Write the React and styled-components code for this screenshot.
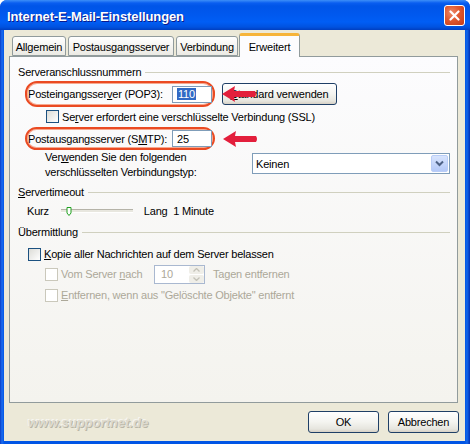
import React from 'react'
import styled, { createGlobalStyle } from 'styled-components'

const GlobalStyle = createGlobalStyle`
  html, body {
    margin: 0;
    padding: 0;
    background: #fff;
  }
  body {
    font-family: 'Liberation Sans', Tahoma, Arial, sans-serif;
    font-size: 11px;
    letter-spacing: -0.2px;
    color: #000;
  }
`

const Window = styled.div`
  width: 470px;
  height: 444px;
  box-sizing: border-box;
  display: flex;
  flex-direction: column;
  border-radius: 7px 7px 0 0;
  overflow: hidden;
  background: linear-gradient(to right, #0a3cc4 0, #1b6cf0 2px, #0055e5 4px, #0055e5 calc(100% - 5px), #1266ea calc(100% - 3px), #0030b4 100%);
`

const TitleBar = styled.div`
  height: 30px;
  flex: none;
  display: flex;
  align-items: center;
  justify-content: space-between;
  padding: 0 5px 0 7px;
  background: linear-gradient(to bottom, #3d8ff8 0px, #0a5ef0 3px, #0055e8 6px, #0058ee 14px, #005ef5 22px, #0052e0 27px, #003fc0 30px);
`

const Title = styled.span`
  color: #fff;
  font-weight: bold;
  font-size: 13px;
  letter-spacing: -0.1px;
  padding-top: 2px;
  text-shadow: 1px 1px 0 #0a1a8c;
`

const CloseButton = styled.div`
  width: 21px;
  height: 21px;
  box-sizing: border-box;
  border: 1px solid #fff;
  border-radius: 3px;
  background: radial-gradient(circle at 35% 35%, #ee8a6a 0%, #e0582f 45%, #c33a17 100%);
  display: flex;
  align-items: center;
  justify-content: center;
`

const Body = styled.div`
  flex: 1;
  margin: 0 5px 3px 4px;
  padding: 3px 7px 0 5px;
  background: #ece9d8;
  display: flex;
  flex-direction: column;
`

const TabStrip = styled.div`
  height: 23px;
  display: flex;
  align-items: flex-end;
  padding-left: 3px;
  gap: 2px;
  position: relative;
  z-index: 1;
`

const Tab = styled.div`
  width: ${p => p.$w}px;
  box-sizing: border-box;
  height: ${p => (p.$active ? 24 : 20)}px;
  margin-bottom: ${p => (p.$active ? -1 : 0)}px;
  margin-left: ${p => (p.$active ? -1 : 0)}px;
  border: 1px solid #919b9c;
  border-bottom: ${p => (p.$active ? 'none' : '1px solid #919b9c')};
  border-top: ${p => (p.$active ? '3px solid #f6b43a' : '1px solid #919b9c')};
  border-radius: 3px 3px 0 0;
  background: ${p => (p.$active ? '#fcfcfe' : 'linear-gradient(#ffffff, #f3f2ee 60%, #ebeae4)')};
  display: flex;
  align-items: center;
  justify-content: center;
  padding-top: ${p => (p.$active ? 0 : 2)}px;
`

const Panel = styled.div`
  height: 347px;
  box-sizing: border-box;
  border: 1px solid #919b9c;
  background: linear-gradient(#fcfcfe, #f4f3ee);
  padding: 0 7px 0 8px;
  display: flex;
  flex-direction: column;
`

const GroupTitle = styled.div`
  display: flex;
  align-items: center;
  height: 14px;
  margin-top: ${p => p.$mt}px;
  &::after {
    content: '';
    flex: 1;
    height: 1px;
    margin-left: 4px;
    background: #d0d0bf;
  }
`

const Row = styled.div`
  position: relative;
  display: flex;
  align-items: ${p => p.$align || 'center'};
  height: ${p => p.$h}px;
  margin-top: ${p => p.$mt || 0}px;
  padding-left: ${p => p.$pl || 0}px;
  color: ${p => (p.$disabled ? '#aca899' : '#000')};
`

const Highlight = styled.div`
  width: 190px;
  height: 100%;
  box-sizing: border-box;
  margin-left: 7px;
  border: 2px solid #ea4a22;
  border-radius: 12px;
  box-shadow: inset 0 0 0 1px #f7a88f;
  padding: 0 1px 0 1px;
  display: flex;
  align-items: center;
`

const FieldLabel = styled.span`
  width: 144px;
  flex: none;
`

const TextInput = styled.div`
  width: 40px;
  height: 17px;
  box-sizing: border-box;
  border: 1px solid #7f9db9;
  background: #fff;
  padding: 0 4px;
  display: flex;
  align-items: center;
`

const Selected = styled.span`
  background: #316ac5;
  color: #fff;
  padding: 0 1px;
`

const Button = styled.div`
  width: ${p => p.$w}px;
  height: 22px;
  box-sizing: border-box;
  margin-left: ${p => p.$ml || 0}px;
  border: 1px solid #1f3f66;
  border-radius: 3px;
  background: linear-gradient(#ffffff, #f4f4f0 50%, #e6e5de 85%, #d6d0c5);
  display: flex;
  align-items: center;
  justify-content: center;
`

const Arrow = styled.svg`
  position: absolute;
  left: ${p => p.$left}px;
  top: 50%;
  margin-top: -9px;
`

const Checkbox = styled.span`
  width: 13px;
  height: 13px;
  flex: none;
  box-sizing: border-box;
  margin-right: 3px;
  border: 1px solid ${p => (p.$disabled ? '#cac8bb' : '#1c5180')};
  background: ${p => (p.$disabled ? '#fff' : 'linear-gradient(135deg, #dcdcd7, #fff)')};
`

const TwoLine = styled.div`
  line-height: 15px;
  margin-left: 27px;
`

const Select = styled.div`
  width: 198px;
  height: 21px;
  box-sizing: border-box;
  margin: 3px 0 0 auto;
  border: 1px solid #7f9db9;
  background: #fff;
  display: flex;
  align-items: center;
  justify-content: space-between;
  padding-left: 3px;
`

const DropButton = styled.div`
  width: 17px;
  height: 17px;
  box-sizing: border-box;
  margin-right: 1px;
  border: 1px solid #b9cdf7;
  border-radius: 2px;
  background: linear-gradient(#d8e4fd, #b4c9f8);
  display: flex;
  align-items: center;
  justify-content: center;
`

const Track = styled.div`
  position: relative;
  width: 72px;
  height: 2px;
  margin: 0 11px 0 12px;
  border-top: 1px solid #b5b3a8;
  border-bottom: 1px solid #fff;
  background: #e8e7df;
`

const Thumb = styled.svg`
  position: absolute;
  left: 5px;
  top: -3px;
`

const Spinner = styled.div`
  width: 51px;
  height: 19px;
  box-sizing: border-box;
  border: 1px solid #a9b8d0;
  background: #fff;
  display: flex;
  align-items: center;
  justify-content: space-between;
  padding-left: 6px;
  margin-right: 8px;
`

const SpinButtons = styled.div`
  width: 15px;
  height: 17px;
  display: flex;
  flex-direction: column;
  gap: 1px;
  span {
    flex: 1;
    background: #efeee8;
    border-radius: 2px;
    display: flex;
    align-items: center;
    justify-content: center;
  }
`

const Footer = styled.div`
  height: 38px;
  display: flex;
  align-items: center;
  margin-right: -1px;
`

const Watermark = styled.span`
  margin-left: 19px;
  font-size: 13px;
  font-weight: bold;
  font-style: italic;
  letter-spacing: 0;
  color: #dedbcf;
  text-shadow: 1px 1px 0 #b9b6a7, -1px -1px 0 #f6f5f0;
`

const ButtonGroup = styled.div`
  margin-left: auto;
  display: flex;
  gap: 9px;
`

const RedArrow = ({ left }) => (
  <Arrow $left={left} width="35" height="18" viewBox="0 0 35 18">
    <path d="M0 9 L13 1 L12 6 L33 6 Q35 9 33 12 L12 12 L13 17 Z" fill="#e31f3c" />
  </Arrow>
)

export default function App() {
  return (
    <>
      <GlobalStyle />
      <Window>
        <TitleBar>
          <Title>Internet-E-Mail-Einstellungen</Title>
          <CloseButton>
            <svg width="11" height="11" viewBox="0 0 11 11">
              <path d="M1.5 1.5 L9.5 9.5 M9.5 1.5 L1.5 9.5" stroke="#fff" strokeWidth="2.2" strokeLinecap="round" />
            </svg>
          </CloseButton>
        </TitleBar>
        <Body>
          <TabStrip>
            <Tab $w={54}>Allgemein</Tab>
            <Tab $w={106}>Postausgangsserver</Tab>
            <Tab $w={62}>Verbindung</Tab>
            <Tab $w={61} $active>Erweitert</Tab>
          </TabStrip>
          <Panel>
            <GroupTitle $mt={8}>Serveranschlussnummern</GroupTitle>

            <Row $h={26} $mt={2}>
              <Highlight>
                <FieldLabel>Posteingangsser<u>v</u>er (POP3):</FieldLabel>
                <TextInput><Selected>110</Selected></TextInput>
              </Highlight>
              <Button $w={115} $ml={7}><u>S</u>tandard verwenden</Button>
              <RedArrow left={204} />
            </Row>

            <Row $h={19} $pl={28}>
              <Checkbox />
              <span>Se<u>r</u>ver erfordert eine verschlüsselte Verbindung (SSL)</span>
            </Row>

            <Row $h={23} $mt={1}>
              <Highlight>
                <FieldLabel>Postausgangsserver (S<u>M</u>TP):</FieldLabel>
                <TextInput>25</TextInput>
              </Highlight>
              <RedArrow left={205} />
            </Row>

            <Row $h={30} $align="flex-start">
              <TwoLine>
                Ver<u>w</u>enden Sie den folgenden<br />
                verschlüsselten Verbindungstyp:
              </TwoLine>
              <Select>
                <span>Keinen</span>
                <DropButton>
                  <svg width="9" height="7" viewBox="0 0 9 7">
                    <path d="M1 1.5 L4.5 5 L8 1.5" fill="none" stroke="#4d6185" strokeWidth="2" />
                  </svg>
                </DropButton>
              </Select>
            </Row>

            <GroupTitle $mt={5}><u>S</u>ervertimeout</GroupTitle>

            <Row $h={16} $mt={4} $pl={9}>
              <span>Kurz</span>
              <Track>
                <Thumb width="6" height="9" viewBox="0 0 6 9">
                  <path d="M1 0.5 L5 0.5 L5 6 L3 8.5 L1 6 Z" fill="#fff" stroke="#21a121" strokeWidth="1" />
                </Thumb>
              </Track>
              <span>Lang&nbsp;&nbsp;1 Minute</span>
            </Row>

            <GroupTitle $mt={6}>Übermittlung</GroupTitle>

            <Row $h={18} $mt={6} $pl={10}>
              <Checkbox />
              <span><u>K</u>opie aller Nachrichten auf dem Server belassen</span>
            </Row>

            <Row $h={20} $mt={1} $pl={27} $disabled>
              <Checkbox $disabled />
              <span style={{ width: 93 }}>Vom Server <u>n</u>ach</span>
              <Spinner>
                <span>10</span>
                <SpinButtons>
                  <span>
                    <svg width="7" height="4" viewBox="0 0 7 4"><path d="M0.5 3.5 L3.5 0.5 L6.5 3.5" fill="none" stroke="#c3c2b8" strokeWidth="1.3" /></svg>
                  </span>
                  <span>
                    <svg width="7" height="4" viewBox="0 0 7 4"><path d="M0.5 0.5 L3.5 3.5 L6.5 0.5" fill="none" stroke="#c3c2b8" strokeWidth="1.3" /></svg>
                  </span>
                </SpinButtons>
              </Spinner>
              <span>Tagen entfernen</span>
            </Row>

            <Row $h={18} $mt={2} $pl={27} $disabled>
              <Checkbox $disabled />
              <span><u>E</u>ntfernen, wenn aus "Gelöschte Objekte" entfernt</span>
            </Row>
          </Panel>
          <Footer>
            <Watermark>www.supportnet.de</Watermark>
            <ButtonGroup>
              <Button $w={71}>OK</Button>
              <Button $w={71}>Abbrechen</Button>
            </ButtonGroup>
          </Footer>
        </Body>
      </Window>
    </>
  )
}
